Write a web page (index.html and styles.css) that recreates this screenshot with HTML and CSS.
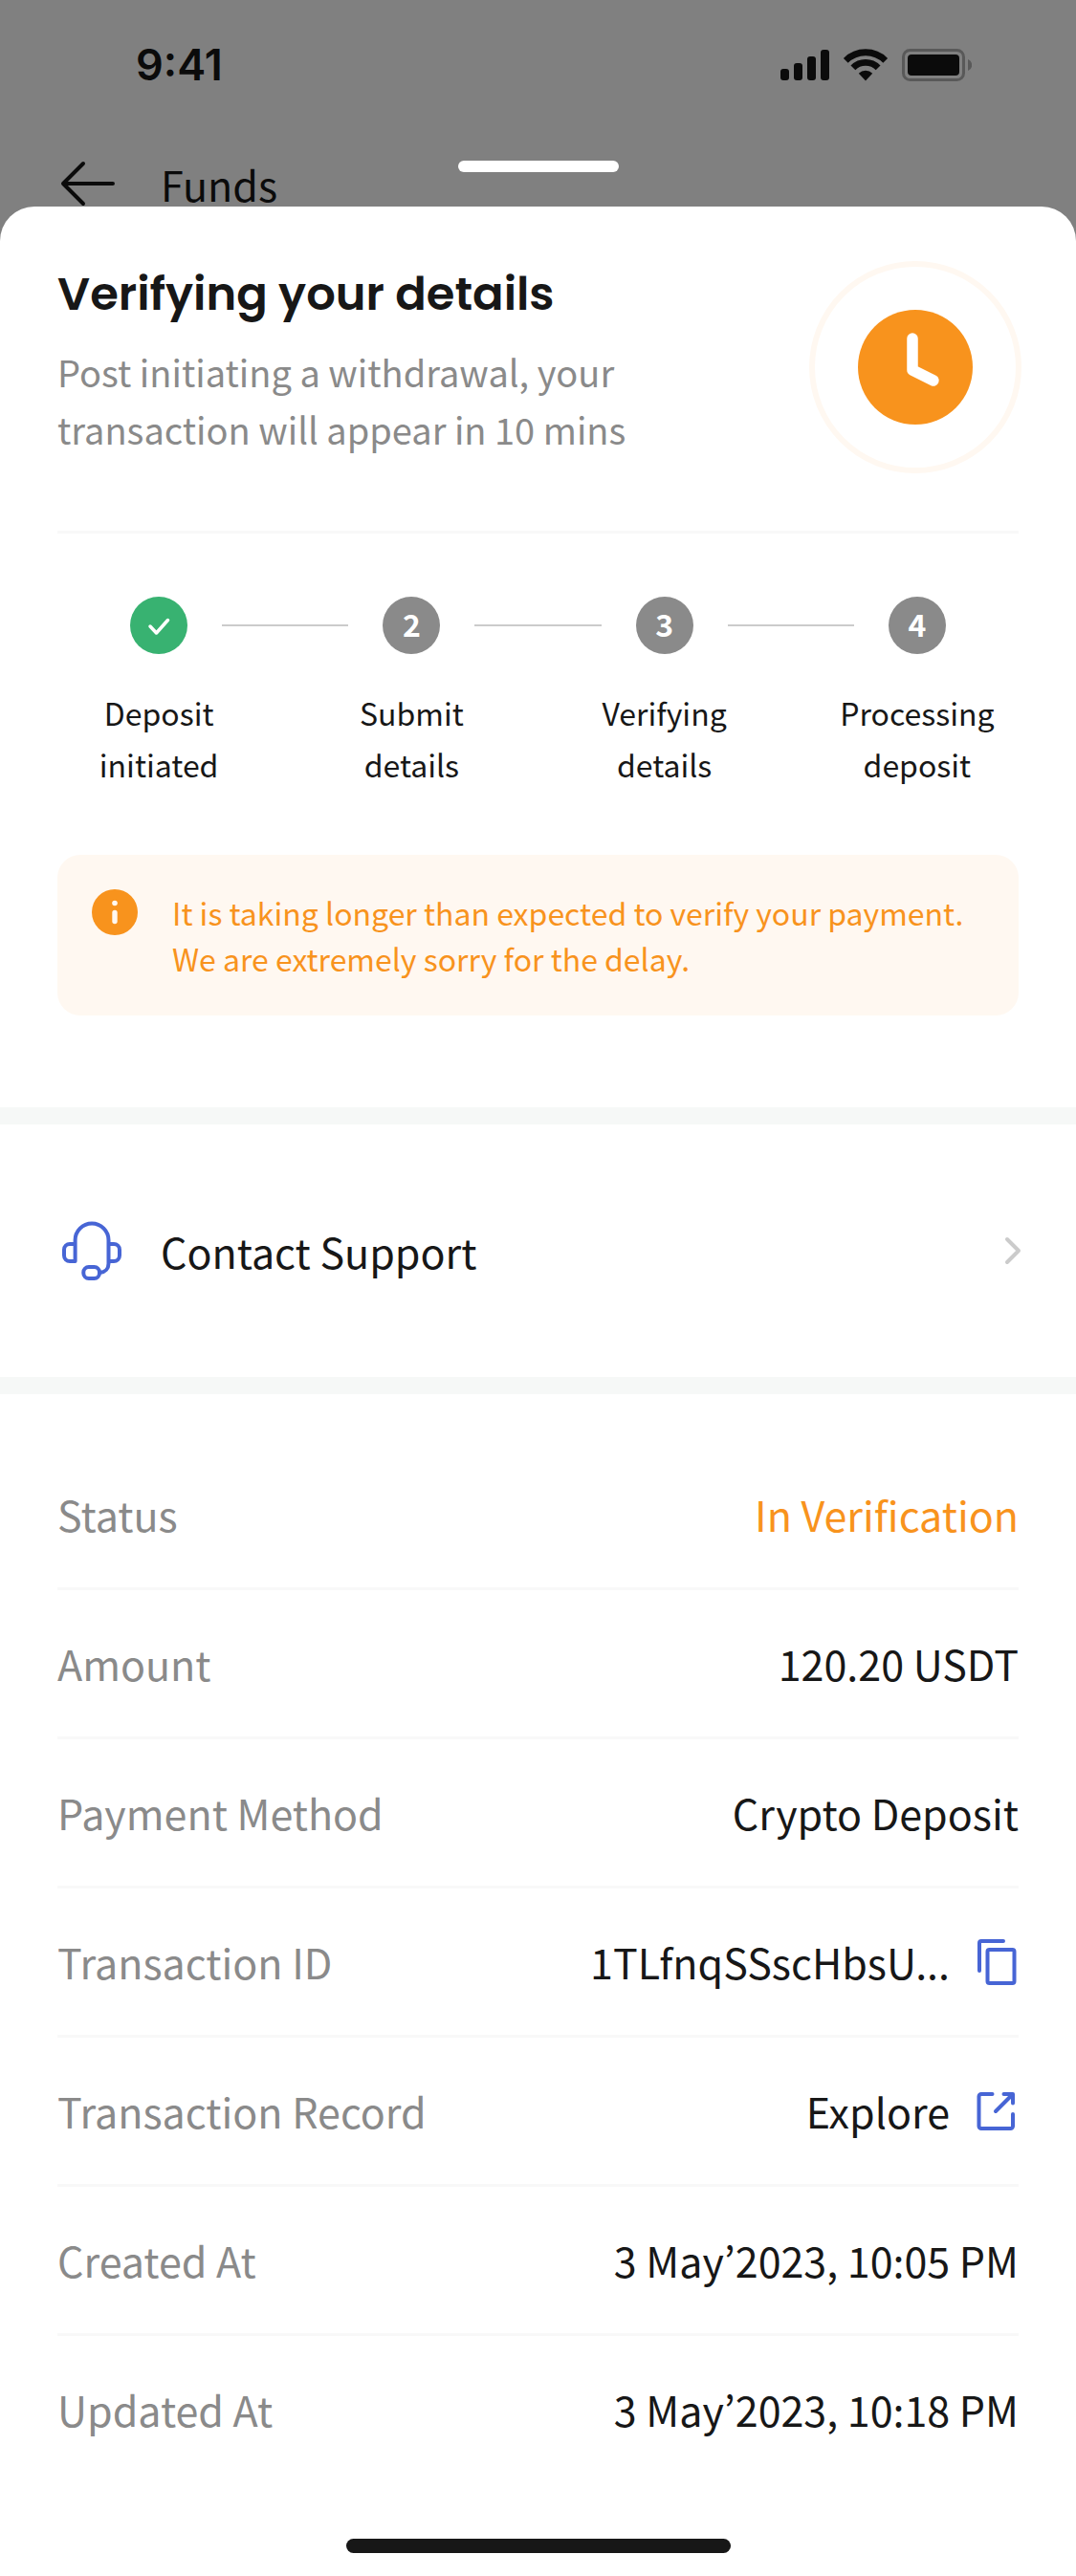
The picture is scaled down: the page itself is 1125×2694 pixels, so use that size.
FILE: index.html
```html
<!DOCTYPE html>
<html lang="en">
<head>
<meta charset="utf-8">
<meta name="viewport" content="width=device-width, initial-scale=1">
<title>Verifying your details</title>
<link rel="stylesheet" href="styles.css">
</head>
<body>
<header class="backdrop">
  <div class="status-bar">
    <span class="clock">9:41</span>
    <svg class="indicators" viewBox="0 0 200 34" aria-hidden="true">
      <g fill="currentColor">
        <rect x="0" y="21" width="9" height="12" rx="3"/>
        <rect x="14" y="15" width="9" height="18" rx="3"/>
        <rect x="28" y="8" width="9" height="25" rx="3"/>
        <rect x="42" y="1" width="9" height="32" rx="3"/>
        <path d="M89 33.4L81.8 25.8A10.3 10.3 0 0 1 96.2 25.8Z"/>
        <rect x="133" y="6" width="54" height="22" rx="4"/>
      </g>
      <path d="M68.3 12.3A29.3 29.3 0 0 1 109.7 12.3M75.9 19.9A18.5 18.5 0 0 1 102.1 19.9" fill="none" stroke="currentColor" stroke-width="6.8"/>
      <rect x="128.5" y="1.5" width="63" height="31" rx="7" fill="none" stroke="#595959" stroke-width="3"/>
      <path d="M196 11a6.4 6.4 0 0 1 0 12z" fill="#595959"/>
    </svg>
  </div>
  <nav class="nav">
    <a class="nav-back" href="#" aria-label="Back">
      <svg viewBox="0 0 72 48" fill="none" stroke="currentColor" stroke-width="4" stroke-linecap="round" stroke-linejoin="round"><path d="M58 24H6M27 3L6 24l21 21"/></svg>
    </a>
    <span class="nav-title">Funds</span>
  </nav>
  <div class="handle"></div>
</header>

<main class="sheet">
  <section class="summary">
    <div class="summary-text">
      <h1>Verifying your details</h1>
      <p>Post initiating a withdrawal, your<br>transaction will appear in 10 mins</p>
    </div>
    <div class="clock-ring">
      <svg viewBox="0 0 120 120" aria-hidden="true"><circle cx="60" cy="60" r="60" fill="#f8931d"/><path d="M57 30v33l22 11" fill="none" stroke="#fff" stroke-width="11.5" stroke-linecap="round" stroke-linejoin="round"/></svg>
    </div>
  </section>

  <ol class="steps">
    <li class="step">
      <div class="track"><span class="marker done"><svg viewBox="0 0 60 60" aria-label="Done"><path d="M21 31l6.500 7L39.500 24.500" fill="none" stroke="#fff" stroke-width="3.500" stroke-linecap="round" stroke-linejoin="round"/></svg></span></div>
      <span class="step-label">Deposit<br>initiated</span>
    </li>
    <li class="step">
      <div class="track"><span class="marker">2</span></div>
      <span class="step-label">Submit<br>details</span>
    </li>
    <li class="step">
      <div class="track"><span class="marker">3</span></div>
      <span class="step-label">Verifying<br>details</span>
    </li>
    <li class="step">
      <div class="track"><span class="marker">4</span></div>
      <span class="step-label">Processing<br>deposit</span>
    </li>
  </ol>

  <div class="notice" role="status">
    <svg viewBox="0 0 48 48" aria-hidden="true"><circle cx="24" cy="24" r="24" fill="#f8931d"/><circle cx="24" cy="14.500" r="2.800" fill="#fff8f1"/><path d="M24 24.500v9" stroke="#fff8f1" stroke-width="5.400" stroke-linecap="round"/></svg>
    <p>It is taking longer than expected to verify your payment. We are extremely sorry for the delay.</p>
  </div>

  <a class="support" href="#">
    <svg class="support-icon" viewBox="0 0 72 72" fill="none" stroke="currentColor" stroke-width="4" stroke-linejoin="round" aria-hidden="true"><path d="M18.600 29H13a6 6 0 0 0-6 6v6a6 6 0 0 0 6 6h5.600V25a17.450 17.450 0 0 1 34.900 0v24.500c0 5-3.500 9-9 9.500M53.500 29H59a6 6 0 0 1 6 6v6a6 6 0 0 1-6 6h-5.500"/><rect x="27.300" y="53" width="16.700" height="12" rx="5.500"/></svg>
    <span class="support-label">Contact Support</span>
    <svg class="chevron" viewBox="0 0 18 30" fill="none" stroke="currentColor" stroke-width="4" stroke-linecap="round" stroke-linejoin="round" aria-hidden="true"><path d="M3 3l12 12L3 27"/></svg>
  </a>

  <dl class="details">
    <div class="row"><dt>Status</dt><dd class="pending">In Verification</dd></div>
    <div class="row"><dt>Amount</dt><dd>120.20 USDT</dd></div>
    <div class="row"><dt>Payment Method</dt><dd>Crypto Deposit</dd></div>
    <div class="row">
      <dt>Transaction ID</dt>
      <dd>1TLfnqSSscHbsU...
        <button class="icon-button" type="button" aria-label="Copy transaction ID"><svg viewBox="0 0 48 48" fill="none" stroke="currentColor" stroke-width="4" stroke-linecap="round" stroke-linejoin="round"><path d="M32 2H9a2 2 0 0 0-2 2v29"/><rect x="15.500" y="11" width="28" height="35" rx="2"/></svg></button>
      </dd>
    </div>
    <div class="row">
      <dt>Transaction Record</dt>
      <dd><a class="explore" href="#">Explore
        <svg viewBox="0 0 48 48" fill="none" stroke="currentColor" stroke-width="4" stroke-linecap="round" stroke-linejoin="round" aria-hidden="true"><path d="M20.500 6H9a2.500 2.500 0 0 0-2.500 2.500v31A2.500 2.500 0 0 0 9 42h30.500a2.500 2.500 0 0 0 2.500-2.500V27M32.500 6H42v9.500M24 24L41 7"/></svg></a></dd>
    </div>
    <div class="row"><dt>Created At</dt><dd>3 May’2023, 10:05 PM</dd></div>
    <div class="row"><dt>Updated At</dt><dd>3 May’2023, 10:18 PM</dd></div>
  </dl>

  <div class="home-indicator"></div>
</main>
</body>
</html>
```
FILE: styles.css
```css
:root {
  --ink: #171717;
  --muted: #8a8a8a;
  --orange: #f8931d;
  --orange-tint: #fff8f1;
  --green: #38b271;
  --blue: #4765d5;
  --line: #f8f8f8;
  --band: #f6f8f7;
  --page-gap: 60px;
}

* {
  box-sizing: border-box;
}

body {
  margin: 0;
  min-height: 100vh;
  display: flex;
  flex-direction: column;
  background: #808080;
  color: var(--ink);
  font-family: "Noto Sans CJK KR", sans-serif;
  font-size: 43px;
  line-height: 51px;
}

h1, p, ol, dl, dd {
  margin: 0;
  padding: 0;
}

a {
  color: inherit;
  text-decoration: none;
}

svg {
  display: block;
  flex: none;
}

/* Dimmed screen behind the sheet */
.backdrop {
  position: relative;
  padding-top: 41px;
  color: #0b0b0b;
}

.status-bar {
  display: flex;
  align-items: center;
  justify-content: space-between;
  padding: 0 109px 0 142px;
}

.clock {
  font-family: Inter, sans-serif;
  font-size: 45px;
  font-weight: 600;
  line-height: 54px;
}

.indicators {
  width: 200px;
  height: 34px;
}

.nav {
  display: flex;
  align-items: center;
  gap: 36px;
  margin-top: 73px;
  padding: 0 var(--page-gap);
  line-height: 48px;
}

.nav-back svg {
  width: 72px;
  height: 48px;
}

.handle {
  position: absolute;
  left: 50%;
  bottom: 36px;
  width: 168px;
  height: 12px;
  margin-left: -84px;
  border-radius: 6px;
  background: #fff;
}

/* Sheet */
.sheet {
  flex: 1;
  display: flex;
  flex-direction: column;
  border-radius: 36px 36px 0 0;
  background: #fff;
}

.summary {
  display: flex;
  justify-content: space-between;
  margin: 0 var(--page-gap);
  padding: 57px 0 60px;
  border-bottom: 3px solid var(--line);
}

.summary h1 {
  margin-bottom: 16px;
  font-family: Poppins, Inter, sans-serif;
  font-size: 48px;
  font-weight: 600;
  line-height: 70px;
}

.summary p {
  color: var(--muted);
  font-size: 38px;
  line-height: 60px;
}

.clock-ring {
  flex: none;
  display: grid;
  place-items: center;
  width: 222px;
  height: 222px;
  margin-right: -3px;
  border: 6px solid var(--orange-tint);
  border-radius: 50%;
}

.clock-ring svg {
  width: 120px;
  height: 120px;
}

.steps {
  display: grid;
  grid-template-columns: repeat(4, 1fr);
  padding: 66px 34px 0;
  list-style: none;
}

.step {
  display: flex;
  flex-direction: column;
  gap: 34px;
  text-align: center;
}

.track {
  display: flex;
  align-items: center;
  gap: 36px;
}

.track::before,
.track::after {
  content: "";
  flex: 1;
  height: 2px;
  background: #cbcbcb;
}

.step:first-child .track::before,
.step:last-child .track::after {
  background: none;
}

.marker {
  width: 60px;
  height: 60px;
  border-radius: 50%;
  background: var(--muted);
  color: #fff;
  font-size: 32px;
  font-weight: 700;
  line-height: 56px;
}

.marker.done {
  background: var(--green);
}

.step-label {
  font-size: 32px;
  line-height: 54px;
}

.notice {
  display: flex;
  gap: 36px;
  margin: 68px var(--page-gap) 96px;
  padding: 36px;
  border-radius: 24px;
  background: var(--orange-tint);
  color: var(--orange);
  font-size: 32px;
  line-height: 48px;
}

.notice svg {
  width: 48px;
  height: 48px;
}

.support {
  display: flex;
  align-items: center;
  gap: 36px;
  padding: 96px 57px 96px var(--page-gap);
  border: solid var(--band);
  border-width: 18px 0;
}

.support-icon {
  width: 72px;
  height: 72px;
  color: var(--blue);
}

.support-label {
  flex: 1;
}

.chevron {
  width: 18px;
  height: 30px;
  color: #cbcbcb;
}

.details {
  padding: 49px var(--page-gap) 0;
}

.row {
  display: flex;
  align-items: center;
  justify-content: space-between;
  padding: 51px 0;
}

.row + .row {
  border-top: 3px solid var(--line);
}

dt {
  color: var(--muted);
}

dd,
.explore {
  display: flex;
  align-items: center;
  gap: 24px;
}

.pending {
  color: var(--orange);
}

.icon-button {
  padding: 0;
  border: 0;
  background: none;
  color: var(--blue);
}

.icon-button svg,
.explore svg {
  width: 48px;
  height: 48px;
  color: var(--blue);
}

.home-indicator {
  width: 402px;
  height: 15px;
  margin: auto auto 24px;
  border-radius: 8px;
  background: var(--ink);
}
```
